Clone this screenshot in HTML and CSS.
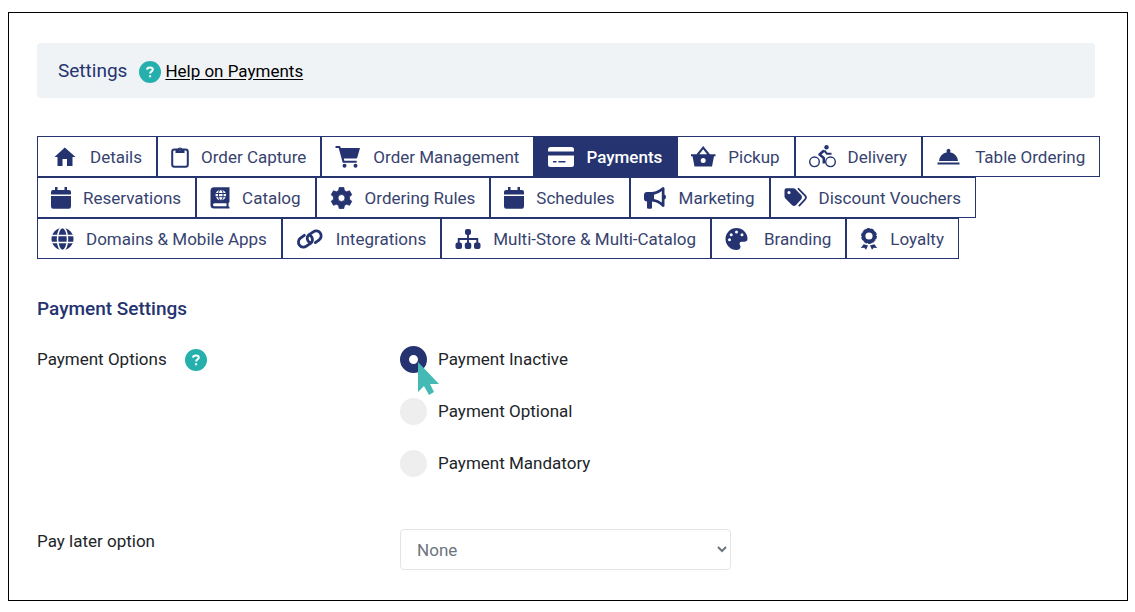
FILE: index.html
```html
<!DOCTYPE html>
<html lang="en">
<head>
  <meta charset="UTF-8">
  <meta name="viewport" content="width=device-width, initial-scale=1.0">
  <title>Payment Settings</title>
  <link rel="stylesheet" href="styles.css">
</head>
<body>
  <main class="panel">
    <header class="page-header">
      <h1>Settings</h1>
      <svg class="help-icon" viewBox="0 0 22 22"><circle cx="11" cy="11" r="11"/><path d="M8 8.6C8.2 5.6 13.8 5.7 13.8 8.6c0 1.9-2.7 2-2.7 3.900M11.100 14.200v2"/></svg>
      <a href="#">Help on Payments</a>
    </header>

    <nav class="tabs">
      <a class="tab" href="#">
        <svg width="27" height="22" viewBox="-1 1 25 22"><path d="M9.500 21v-7h4.500v7h5.500v-9h3L11.800 2.500 1.500 12h3v9z"/></svg>
        Details
      </a>
      <a class="tab" href="#">
        <svg width="18" height="22" viewBox="0 0 18 22"><rect x="1.200" y="3.500" width="15.600" height="17.300" rx="2.200" fill="none" stroke="currentColor" stroke-width="2"/><path fill-rule="evenodd" d="M4.500 7V3.500h1.800a2.800 2.800 0 0 1 5.400 0h1.800V7zM9 2.400a1.100 1.100 0 1 0 0 2.200 1.100 1.100 0 0 0 0-2.200z"/></svg>
        Order Capture
      </a>
      <a class="tab" href="#">
        <svg width="26" height="22" viewBox="0 0 25 22"><path d="M0 0h4.500l.8 2H24.500l-2.700 9.500a1.500 1.500 0 0 1-1.500 1.100H8.300l.5 2.200h12.400v2H7.200L3.200 2H0z"/><circle cx="9" cy="19.700" r="2"/><circle cx="20" cy="19.700" r="2"/></svg>
        Order Management
      </a>
      <a class="tab active" href="#" aria-current="page">
        <svg width="26" height="20" viewBox="0 0 26 20"><path fill-rule="evenodd" d="M2.500 0h21A2.500 2.500 0 0 1 26 2.500v2H0v-2A2.500 2.500 0 0 1 2.500 0zM0 8.500h26v9a2.500 2.500 0 0 1-2.500 2.500h-21A2.500 2.500 0 0 1 0 17.500zM5 14v1.500h3.500V14zM10.500 14v1.500h7V14z"/></svg>
        Payments
      </a>
      <a class="tab" href="#">
        <svg width="25" height="22" viewBox="0 0 25 22"><path fill-rule="evenodd" d="M0 8.300h5.500L12.200 0l6.700 8.300H24.500v2H23L21 20.500H3.500L1.500 10.300H0zM8.300 8.300h7.800l-3.900-5zM12.200 12a2.500 2.500 0 1 0 0 5 2.500 2.500 0 0 0 0-5z"/></svg>
        Pickup
      </a>
      <a class="tab" href="#">
        <svg width="27" height="23" viewBox="0 0 27 23"><g fill="none" stroke="currentColor"><circle cx="5.500" cy="16.800" r="4.800" stroke-width="1.400"/><circle cx="21.500" cy="16.800" r="4.800" stroke-width="1.400"/><path d="m15 5.500-4.500 4 4.300 3.500v5.500" stroke-width="2.500" stroke-linejoin="round"/><path d="m15.300 5.500 2.700 3.300h4.500" stroke-width="2"/></g><circle cx="17.500" cy="2.200" r="2.200"/></svg>
        Delivery
      </a>
      <a class="tab" href="#">
        <svg width="27" height="18" viewBox="0 0 26 18"><path d="M2.500 13a9.700 9.400 0 0 1 8-8.800 2 2 0 1 1 3 0 9.700 9.400 0 0 1 8 8.800zM1 14.500h22v2H1z"/></svg>
        Table Ordering
      </a>
      <a class="tab" href="#">
        <svg width="20" height="22" viewBox="0 0 20 22"><path d="M4 0h2.500v3h7V0H16v3h2a2 2 0 0 1 2 2v2.500H0V5a2 2 0 0 1 2-2h2zM0 9h20v10.500a2.200 2.200 0 0 1-2.200 2.200H2.200A2.200 2.200 0 0 1 0 19.500z"/></svg>
        Reservations
      </a>
      <a class="tab" href="#">
        <svg width="20" height="22" viewBox="0 0 19 22"><path fill-rule="evenodd" d="M3.500.3H19V15l-1 1v3.200l1 .8v1.500H3.500A3.500 3.500 0 0 1 0 18V3.800A3.500 3.500 0 0 1 3.500.3zM4 16.200a1.500 1.500 0 0 0 0 3h12v-3z"/><circle cx="10.300" cy="8" r="5.300" fill="#fff"/><g fill="none" stroke="currentColor" stroke-width="1"><ellipse cx="10.300" cy="8" rx="2.300" ry="5.300"/><path d="M5 6.500h10.600M5 9.700h10.600"/></g></svg>
        Catalog
      </a>
      <a class="tab" href="#">
        <svg width="23" height="22" viewBox="0 0 22 22"><path fill-rule="evenodd" d="M8.700.5h4.600l.6 3 2.200 1.300 2.900-1 2.300 4-2.300 2v2.500l2.300 2-2.300 4-2.900-1-2.200 1.200-.6 3H8.700l-.6-3-2.200-1.200-2.900 1-2.300-4 2.300-2V9.800l-2.300-2 2.300-4 2.900 1 2.200-1.300zM11 7.500a3.500 3.500 0 1 0 0 7 3.500 3.500 0 0 0 0-7z" stroke="currentColor" stroke-width=".8" stroke-linejoin="round"/></svg>
        Ordering Rules
      </a>
      <a class="tab" href="#">
        <svg width="20" height="22" viewBox="0 0 20 22"><path d="M4 0h2.500v3h7V0H16v3h2a2 2 0 0 1 2 2v2.500H0V5a2 2 0 0 1 2-2h2zM0 9h20v10.500a2.200 2.200 0 0 1-2.200 2.200H2.200A2.200 2.200 0 0 1 0 19.500z"/></svg>
        Schedules
      </a>
      <a class="tab" href="#">
        <svg width="23" height="22" viewBox="0 0 23 22"><path fill-rule="evenodd" d="M18.500.3a1.300 1.300 0 0 1 2 1v6.200a2.800 2.800 0 0 1 0 5v6.200a1.300 1.300 0 0 1-2 1l-3.200-2.600a12 12 0 0 0-7.300-2.600v6a1.200 1.200 0 0 1-1.200 1.200H4.200A1.200 1.200 0 0 1 3 20.500v-6a3 3 0 0 1-3-3V8a3 3 0 0 1 3-3h5a12 12 0 0 0 7.300-2.400zM17.800 4A15 15 0 0 1 10 7.700v4.200a15 15 0 0 1 7.800 3.700z"/></svg>
        Marketing
      </a>
      <a class="tab" href="#">
        <svg width="23" height="22" viewBox="0 0 22 22"><path fill-rule="evenodd" d="M0 3.200A2 2 0 0 1 2 1.200h6.800a3 3 0 0 1 2 .9l6 6.200a3 3 0 0 1 0 4L11.600 18a3 3 0 0 1-4.200 0L.9 11.500A3 3 0 0 1 0 9.500zM4.500 4a1.600 1.600 0 1 0 0 3.200 1.600 1.600 0 0 0 0-3.200z"/><path d="m14 1.800 6.400 6.600a3 3 0 0 1 0 4.200l-5.600 6" fill="none" stroke="currentColor" stroke-width="1.800" stroke-linecap="round"/></svg>
        Discount Vouchers
      </a>
      <a class="tab" href="#">
        <svg width="23" height="22" viewBox="0 0 23 22"><circle cx="11.500" cy="11" r="11"/><g fill="none" stroke="#fff" stroke-width="1.500"><ellipse cx="11.500" cy="11" rx="5" ry="11.500"/><path d="M0 7.500h23M0 14.500h23"/></g></svg>
        Domains &amp; Mobile Apps
      </a>
      <a class="tab" href="#">
        <svg width="28" height="22" viewBox="0 0 27 22"><g fill="none" stroke="currentColor" stroke-width="2.800" stroke-linecap="round" transform="rotate(8 13.500 11)"><path d="M14.300 14.800a4.800 4.800 0 0 1-2.500-7.800l3.900-3.500a4.900 4.900 0 0 1 7 0 4.900 4.900 0 0 1 0 7l-3.400 3.300"/><path d="M12.200 7.200a4.800 4.800 0 0 1 2.700 7.800l-4 3.500a4.900 4.900 0 0 1-7 0 4.900 4.900 0 0 1 0-7l3.500-3.400"/></g></svg>
        Integrations
      </a>
      <a class="tab" href="#">
        <svg width="26" height="20" viewBox="0 0 25 20"><rect x="9.500" y="0" width="6" height="6" rx="2"/><rect x="0" y="13.500" width="6.500" height="6.500" rx="2"/><rect x="9.300" y="13.500" width="6.500" height="6.500" rx="2"/><rect x="18.500" y="13.500" width="6.500" height="6.500" rx="2"/><path d="M12.500 5v9M3.200 14v-4h18.600v4" fill="none" stroke="currentColor" stroke-width="1.900"/></svg>
        Multi-Store &amp; Multi-Catalog
      </a>
      <a class="tab" href="#">
        <svg width="27" height="22" viewBox="2 0 26 22"><path transform="translate(2)" fill-rule="evenodd" d="M11 0a11 11 0 0 1 11 11c0 2-1.500 2.700-3 2.700h-3a2 2 0 0 0-2 2c0 1.200 1 1.800 1 3.100 0 1.800-1.300 3.200-4 3.200A11 11 0 0 1 11 0zM11 2.500a1.500 1.500 0 1 0 0 3 1.500 1.500 0 0 0 0-3zM5.700 5.200a1.500 1.500 0 1 0 0 3 1.500 1.500 0 0 0 0-3zM16.500 5.200a1.500 1.500 0 1 0 0 3 1.500 1.500 0 0 0 0-3zM4 10.300a1.500 1.500 0 1 0 0 3 1.500 1.500 0 0 0 0-3z"/></svg>
        Branding
      </a>
      <a class="tab" href="#">
        <svg width="18" height="22" viewBox="0 0 17 22"><circle cx="8.500" cy="8" r="5.500" fill="none" stroke="currentColor" stroke-width="3.800"/><circle cx="8.500" cy="8" r="7.500" fill="none" stroke="currentColor" stroke-width="1" stroke-dasharray="3.200 1.500"/><path d="m3.200 16.200 4.300 1.300-2 4.300-1.700-2-3.500.2zM13.800 16.200l-4.300 1.300 2 4.300 1.700-2 3.500.2z"/></svg>
        Loyalty
      </a>
    </nav>

    <form class="settings-form">
      <h2>Payment Settings</h2>

      <div class="form-row" role="radiogroup" aria-labelledby="payment-options">
        <div class="form-label">
          <span id="payment-options">Payment Options</span>
          <svg class="help-icon" viewBox="0 0 22 22"><circle cx="11" cy="11" r="11"/><path d="M8 8.600C8.200 5.600 13.800 5.700 13.800 8.600c0 1.900-2.700 2-2.700 3.900M11.100 14.200v2"/></svg>
        </div>
        <div class="radio-list">
          <div class="radio">
            <input type="radio" name="payment" id="inactive" checked>
            <label for="inactive">Payment Inactive</label>
            <svg class="pointer" width="22" height="33" viewBox="0 0 22 33"><path d="M0 0v30l6-6 5 9 5-3-4-8h9z"/></svg>
          </div>
          <div class="radio">
            <input type="radio" name="payment" id="optional">
            <label for="optional">Payment Optional</label>
          </div>
          <div class="radio">
            <input type="radio" name="payment" id="mandatory">
            <label for="mandatory">Payment Mandatory</label>
          </div>
        </div>
      </div>

      <div class="form-row pay-later">
        <label for="pay-later">Pay later option</label>
        <select id="pay-later">
          <option>None</option>
        </select>
      </div>
    </form>
  </main>
</body>
</html>
```
FILE: styles.css
```css
* {
  box-sizing: border-box;
}

body {
  margin: 12px 7px 0 8px;
  background-color: #fff;
  color: #212529;
  font-family: Roboto, sans-serif;
  font-size: 17px;
  line-height: 24px;
}

.panel {
  border: 1px solid #000;
  padding: 30px 22px 30px 28px;
}

.page-header {
  display: flex;
  align-items: center;
  height: 55px;
  margin-right: 10px;
  padding: 0 21px;
  border-radius: 4px;
  background-color: #eff3f6;
}

.page-header h1 {
  margin: 0 12px 0 0;
  color: #263470;
  font-size: 19px;
  font-weight: 400;
}

.page-header a {
  margin-left: 4px;
  color: #000;
  text-underline-offset: 2px;
}

.help-icon {
  flex: none;
  width: 22px;
  height: 22px;
  margin-top: 2px;
  fill: #26b0ad;
}

.help-icon path {
  fill: none;
  stroke: #fff;
  stroke-width: 2;
}

.tabs {
  display: flex;
  flex-wrap: wrap;
  margin-top: 38px;
}

.tab {
  display: flex;
  align-items: center;
  gap: 12px;
  height: 41px;
  padding: 0 14px 0 13px;
  border: 1px solid #26346f;
  color: #37436f;
  text-decoration: none;
  white-space: nowrap;
}

.tab svg {
  flex: none;
  color: #253471;
  fill: currentColor;
}

.tab.active {
  background-color: #253471;
  color: #fff;
  font-weight: 500;
}

.tab.active svg {
  color: #fff;
}

.settings-form h2 {
  margin: 38px 0 0;
  color: #253471;
  font-size: 19px;
  font-weight: 500;
}

.form-row {
  display: grid;
  grid-template-columns: 34% 31% 1fr;
  margin-top: 24px;
}

.pay-later {
  margin-top: 52px;
}

.form-label {
  display: flex;
  align-items: center;
  gap: 18px;
  height: 28px;
}

.radio-list {
  display: grid;
  gap: 24px;
}

.radio {
  position: relative;
  display: flex;
  align-items: center;
  gap: 11px;
  height: 28px;
}

.radio input {
  appearance: none;
  width: 27px;
  height: 27px;
  margin: 0;
  border-radius: 50%;
  background-color: #eee;
}

.radio input:checked {
  border: 9px solid #253471;
  background-color: #fff;
}

.pointer {
  position: absolute;
  top: 17px;
  left: 18px;
  fill: #45bab5;
}

.form-row select {
  height: 41px;
  padding: 0 12px;
  border: 1px solid #e2e5e8;
  border-radius: 4px;
  background-color: #fff;
  color: #6c757d;
  font: inherit;
}
```
